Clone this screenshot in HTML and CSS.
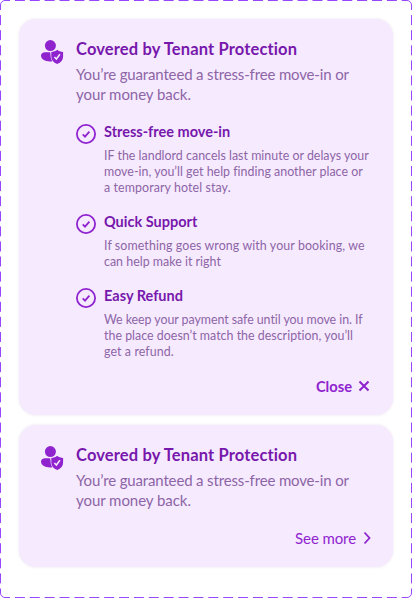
FILE: index.html
```
<!DOCTYPE html>
<html lang="en">
<head>
<meta charset="utf-8">
<title>Tenant Protection</title>
<link rel="stylesheet" href="styles.css">
</head>
<body>
<svg width="0" height="0" class="defs">
  <symbol id="tenant" viewBox="0 0 24 26">
    <circle cx="10.400" cy="6.600" r="5.500"/>
    <path d="M10.200 13.200H5.200C2.600 13.200 1 14.600 1 16.600c0 3.700 3.800 5.900 9.100 5.900 .9 0 1.600-.1 2.300-.2-1.300-1.700-1.800-3.500-1.800-6z"/>
    <path d="M17.200 10.800c1.600 1.300 3.600 2.100 5.900 2.200v4.600c0 3.500-2.100 6.100-5.900 7.400-3.800-1.300-5.900-3.900-5.900-7.400v-4.600c2.300-.1 4.300-.9 5.900-2.200z"/>
    <path class="mark" d="M14.400 17.900l2 2.100 3.500-4.700"/>
  </symbol>
  <symbol id="check" viewBox="0 0 20 20">
    <circle cx="10" cy="10" r="9.100" stroke-width="1.800"/>
    <path d="M6.700 10.400l2.300 2.200 4.400-5" stroke-width="1.800"/>
  </symbol>
</svg>
<main class="frame">
  <svg class="outline" width="412" height="598">
    <path class="horizontal" d="M0 .5H407M0 597.500H407"/>
    <path class="vertical" d="M.5 0V593M411.500 0V593"/>
    <path class="erase" d="M0 0h5v5H0zM407 0h5v5h-5zM0 593h5v5H0zM407 593h5v5h-5z"/>
    <path d="M.5 5A4.500 4.500 0 0 1 5 .5h5M407 .5a4.500 4.500 0 0 1 4.500 4.500v5M411.500 593a4.500 4.500 0 0 1-4.500 4.500M5 597.500a4.500 4.500 0 0 1-4.500-4.500"/>
  </svg>
  <section class="card">
    <svg class="tenant"><use href="#tenant"/></svg>
    <div class="body">
      <h2>Covered by Tenant Protection</h2>
      <p class="lead"><span>You’re guaranteed a stress-free move-in or</span> <span class="lead-end">your money back.</span></p>
      <ul>
        <li>
          <svg class="check"><use href="#check"/></svg>
          <div>
            <h3>Stress-free move-in</h3>
            <p><span>IF the landlord cancels last minute or delays your</span> <span>move-in, you’ll get help finding another place or</span> <span class="loose">a temporary hotel stay.</span></p>
          </div>
        </li>
        <li>
          <svg class="check"><use href="#check"/></svg>
          <div>
            <h3>Quick Support</h3>
            <p><span class="loose">If something goes wrong with your booking, we</span> <span>can help make it right</span></p>
          </div>
        </li>
        <li>
          <svg class="check"><use href="#check"/></svg>
          <div>
            <h3>Easy Refund</h3>
            <p><span class="tight">We keep your payment safe until you move in. If</span> <span>the place doesn’t match the description, you’ll</span> <span class="loose">get a refund.</span></p>
          </div>
        </li>
      </ul>
      <a class="action close">Close<svg width="12" height="12"><path d="M1.500 1.500l9 9M10.500 1.500l-9 9"/></svg></a>
    </div>
  </section>
  <section class="card">
    <svg class="tenant"><use href="#tenant"/></svg>
    <div class="body">
      <h2>Covered by Tenant Protection</h2>
      <p class="lead"><span>You’re guaranteed a stress-free move-in or</span> <span class="lead-end">your money back.</span></p>
      <a class="action more">See more<svg width="8" height="14"><path d="M1.500 1.500l5 5.500-5 5.500"/></svg></a>
    </div>
  </section>
</main>
</body>
</html>
```

FILE: styles.css
```
* { box-sizing: border-box; margin: 0; padding: 0; }
body { background: #fff; font-family: Lato, sans-serif; font-variant-ligatures: none; }
.defs { position: absolute; }
.frame {
  position: relative;
  width: 412px;
  height: 598px;
  padding: 19px;
  display: flex;
  flex-direction: column;
  gap: 10px;
}
.outline { position: absolute; left: 0; top: 0; }
.outline path { fill: none; stroke: #9747ff; }
.outline .horizontal { stroke-dasharray: 10 4.88; }
.outline .vertical { stroke-dasharray: 10 5.09; }
.outline .erase { fill: #fff; stroke: none; }
.card {
  display: flex;
  gap: 12px;
  width: 374px;
  padding: 20px 23px 0 21px;
  border-radius: 17px;
  background: #f6eaff;
  box-shadow: 0 0 3px rgba(90, 40, 130, .13);
  height: 396px;
}
.card + .card { height: 142px; }
.tenant { width: 24px; height: 26px; fill: #8f24cf; flex: none; }
.mark { fill: none; stroke: #f6eaff; stroke-width: 1.5; }
.body { flex: 1; display: flex; flex-direction: column; white-space: nowrap; }
h2 { font-size: 16.5px; line-height: 20px; font-weight: 700; color: #7718ac; letter-spacing: .14px; }
span { display: block; }
.lead { margin-top: 5px; font-size: 15px; line-height: 20px; color: #8d65a6; letter-spacing: -.15px; }
.lead-end { letter-spacing: -.05px; }
ul { list-style: none; margin-top: 18px; display: flex; flex-direction: column; gap: 16px; }
li { display: flex; gap: 8px; }
.check { width: 20px; height: 20px; margin-top: 2px; fill: none; stroke: #8f24cf; flex: none; }
h3 { padding-top: 1px; font-size: 14.5px; line-height: 18px; font-weight: 700; color: #7718ac; }
li p { margin-top: 7px; font-size: 12.4px; line-height: 16px; color: #8d65a6; letter-spacing: .02px; }
.loose { letter-spacing: .1px; }
.tight { letter-spacing: -.05px; }
.action {
  align-self: flex-end;
  display: flex;
  align-items: center;
  gap: 6px;
  font-size: 15px;
  line-height: 20px;
  color: #8f24cf;
}
.action path { fill: none; stroke: #8f24cf; stroke-width: 1.8; }
.close { margin-top: 16px; font-size: 14.7px; font-weight: 700; }
.close path { stroke-width: 2.1; }
.more { margin-top: 18px; margin-right: -1px; gap: 7px; letter-spacing: -.1px; }
```
